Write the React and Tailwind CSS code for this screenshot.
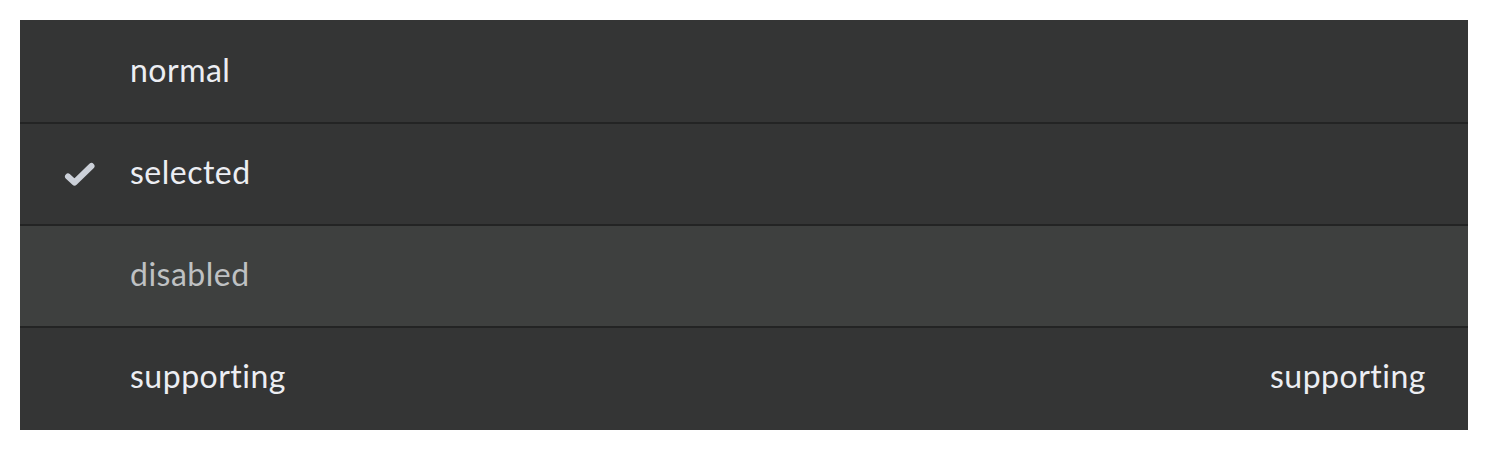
import React from 'react'

const Check = () => (
    <svg width="34" height="26" viewBox="0 0 34 26" fill="none" className="ml-[42px]">
        <path d="M6 15.5 L12.5 21.5 L29.5 5" stroke="#cbd0d8" strokeWidth="6" strokeLinecap="round" strokeLinejoin="round" />
    </svg>
)

const Row = ({ label, selected, disabled, supporting, border }) => (
    <div className={`flex items-center ${border ? 'h-[102px] border-t-2 border-[#232424]' : 'h-[100px]'} ${disabled ? 'bg-[#3e403f]' : ''}`}>
        <div className="w-[110px] flex items-center">
            {selected && <Check />}
        </div>
        <span className={`flex-1 mb-[4px] ${disabled ? 'text-[#bfc1c3]' : 'text-[#eceef3]'}`}>{label}</span>
        {supporting && <span className="pr-[42px] mb-[4px] text-[#eceef3]">{supporting}</span>}
    </div>
)

const App = () => {
    return (
        <div className="p-5 bg-white" style={{ fontFamily: 'Lato, "Open Sans", sans-serif' }}>
            <div className="bg-[#343535] py-[2px] text-[32px] leading-none tracking-[0.5px] [font-variant-ligatures:none]">
                <Row label="normal" />
                <Row label="selected" selected border />
                <Row label="disabled" disabled border />
                <Row label="supporting" supporting="supporting" border />
            </div>
        </div>
    )
}

export default App
